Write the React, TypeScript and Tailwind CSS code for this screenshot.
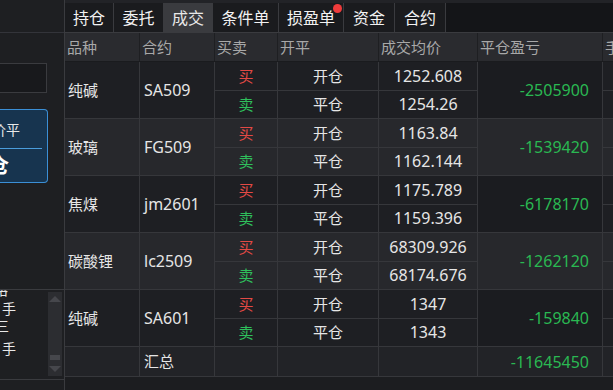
import React from "react";

const FONT = { fontFamily: '"Noto Sans", "Noto Sans CJK SC", sans-serif' };

type Group = {
  name: string;
  code: string;
  prices: [string, string];
  pnl: string;
};

const groups: Group[] = [
  { name: "纯碱", code: "SA509", prices: ["1252.608", "1254.26"], pnl: "-2505900" },
  { name: "玻璃", code: "FG509", prices: ["1163.84", "1162.144"], pnl: "-1539420" },
  { name: "焦煤", code: "jm2601", prices: ["1175.789", "1159.396"], pnl: "-6178170" },
  { name: "碳酸锂", code: "lc2509", prices: ["68309.926", "68174.676"], pnl: "-1262120" },
  { name: "纯碱", code: "SA601", prices: ["1347", "1343"], pnl: "-159840" },
];

const tabs = ["持仓", "委托", "成交", "条件单", "损盈单", "资金", "合约"];
const tabW = ["w-[49px]", "w-[50px]", "w-[49px]", "w-[66px]", "w-[65px]", "w-[51px]", "w-[51px]"];

function GroupRow({ g, idx }: { g: Group; idx: number }) {
  const bg = idx % 2 === 0 ? "bg-[#1e1f23]" : "bg-[#27282c]";
  const pnlBg = idx % 2 === 0 ? "bg-[#1b1c20]" : "bg-[#27282c]";
  return (
    <div className={`flex h-[57px] border-b border-[#36373b] ${bg}`}>
      <div className="w-[75px] shrink-0 border-r border-[#36373b] flex items-center pl-[3px] text-[15px] text-[#e6e6e6]">
        {g.name}
      </div>
      <div className="w-[75px] shrink-0 border-r border-[#36373b] flex items-center pl-[4px] text-[16px] text-[#e6e6e6]">
        {g.code}
      </div>
      <div className="w-[263px] shrink-0 flex flex-col">
        {[0, 1].map((i) => (
          <div
            key={i}
            className={`flex flex-1 ${i === 0 ? "border-b border-[#36373b]" : ""}`}
          >
            <div
              className={`w-[63px] border-r border-[#36373b] flex items-center justify-center text-[15px] ${
                i === 0 ? "text-[#e34a45]" : "text-[#2fbf5c]"
              }`}
            >
              {i === 0 ? "买" : "卖"}
            </div>
            <div className="w-[101px] border-r border-[#36373b] flex items-center justify-center text-[15px] text-[#e6e6e6]">
              {i === 0 ? "开仓" : "平仓"}
            </div>
            <div className="w-[99px] border-r border-[#36373b] flex items-center justify-center text-[16px] text-[#e6e6e6]">
              {g.prices[i]}
            </div>
          </div>
        ))}
      </div>
      <div
        className={`w-[125px] shrink-0 border-r border-[#36373b] flex items-center justify-end pr-[13px] text-[16px] text-[#2ab852] ${pnlBg}`}
      >
        {g.pnl}
      </div>
      <div className="flex-1 flex flex-col">
        <div className="flex-1 border-b border-[#36373b]" />
        <div className="flex-1" />
      </div>
    </div>
  );
}

export default function App() {
  return (
    <div
      className="w-[613px] h-[390px] bg-[#1c1d20] flex overflow-hidden text-white"
      style={FONT}
    >
      {/* Left panel */}
      <div className="w-[65px] shrink-0 border-r border-[#3a3b3f] flex flex-col bg-[#1e1f22]">
        <div className="h-[33px] shrink-0 border-b border-[#33343a]" />
        <div className="mt-[30px] h-[30px] w-[47px] border-y border-r border-[#3a3b3f] bg-[#18191c]" />
        <div className="mt-[16px] h-[74px] w-[48px] rounded-r-[4px] border-y border-r border-[#3b8fd6] bg-[#17344f] flex flex-col overflow-hidden">
          <div className="h-[38px] flex items-center justify-end pr-[27px] overflow-hidden whitespace-nowrap text-[14px] text-[#e8e8e8]">
            市价平
          </div>
          <div className="h-px w-[42px] bg-[#4a9ddc]" />
          <div className="flex-1 flex items-center justify-end pr-[38px] overflow-hidden whitespace-nowrap text-[20px] font-bold text-white">
            平仓
          </div>
        </div>
        <div className="h-[106px] shrink-0" />
        <div className="h-[91px] shrink-0 border-t border-b border-[#3a3b3f] flex overflow-hidden">
          <div className="w-[48px] shrink-0 flex flex-col text-[14px] leading-[17px] text-[#e8e8e8] -mt-[9px]">
            <div className="w-[8px] flex justify-end overflow-hidden whitespace-nowrap">价格</div>
            <div className="h-[2px]" />
            <div className="w-[16px] flex justify-end overflow-hidden whitespace-nowrap">卖1手</div>
            <div className="w-[9px] flex justify-end overflow-hidden whitespace-nowrap">空单三</div>
            <div className="h-[6px]" />
            <div className="w-[16px] flex justify-end overflow-hidden whitespace-nowrap">买1手</div>
          </div>
          <div className="w-[14px] shrink-0 mt-[2px] mb-[3px] bg-[#2c2d31] flex flex-col items-center justify-between py-[4px]">
            <div className="w-0 h-0 border-l-[6px] border-r-[6px] border-b-[6px] border-l-transparent border-r-transparent border-b-[#46474c]" />
            <div className="flex flex-col items-center gap-[6px]">
              <div className="w-[10px] h-[5px] bg-[#46474c]" />
              <div className="w-0 h-0 border-l-[6px] border-r-[6px] border-t-[6px] border-l-transparent border-r-transparent border-t-[#46474c]" />
            </div>
          </div>
        </div>
      </div>

      {/* Right panel */}
      <div className="flex-1 flex flex-col min-w-0">
        {/* Tabs */}
        <div className="h-[33px] shrink-0 bg-[#141518] border-b border-[#3a3b3f] flex border-t-[3px] border-t-[#222327]">
          {tabs.map((t, i) => (
            <div
              key={t}
              className={`${tabW[i]} relative h-full flex items-center justify-center text-[16px] border-r border-[#3a3b3f] ${
                i === 2 ? "bg-[#3a3b3f] text-[#e8e8e8]" : "bg-[#1a1b1e] text-[#f2f2f2]"
              }`}
            >
              {t}
              {t === "损盈单" && (
                <span className="absolute right-[1px] top-[1px] w-[9px] h-[9px] rounded-full bg-[#ef3b3b]" />
              )}
            </div>
          ))}
        </div>

        {/* Header */}
        <div className="h-[29px] shrink-0 flex bg-[#2a2b2f] border-b border-[#1a1b1e] text-[15px] text-[#a8a8a8]">
          {[
            ["品种", "w-[75px]"],
            ["合约", "w-[75px]"],
            ["买卖", "w-[63px]"],
            ["开平", "w-[101px]"],
            ["成交均价", "w-[99px]"],
            ["平仓盈亏", "w-[125px]"],
          ].map(([t, w]) => (
            <div
              key={t}
              className={`${w} shrink-0 border-r border-[#1e1f22] flex items-center pl-[2px] whitespace-nowrap`}
            >
              {t}
            </div>
          ))}
          <div className="flex-1 pl-[2px] flex items-center overflow-hidden whitespace-nowrap">手续费</div>
        </div>

        {/* Body */}
        {groups.map((g, i) => (
          <GroupRow key={i} g={g} idx={i} />
        ))}

        {/* Summary */}
        <div className="h-[30px] shrink-0 flex bg-[#222327] border-b border-[#36373b]">
          <div className="w-[75px] shrink-0 border-r border-[#36373b]" />
          <div className="w-[75px] shrink-0 border-r border-[#36373b] flex items-center pl-[4px] text-[15px] text-[#e6e6e6]">
            汇总
          </div>
          <div className="w-[63px] shrink-0 border-r border-[#36373b]" />
          <div className="w-[101px] shrink-0 border-r border-[#36373b]" />
          <div className="w-[99px] shrink-0 border-r border-[#36373b]" />
          <div className="w-[125px] shrink-0 border-r border-[#36373b] flex items-center justify-end pr-[13px] text-[16px] text-[#2ab852]">
            -11645450
          </div>
          <div className="flex-1" />
        </div>
        <div className="flex-1 bg-[#1c1d20]" />
      </div>
    </div>
  );
}
